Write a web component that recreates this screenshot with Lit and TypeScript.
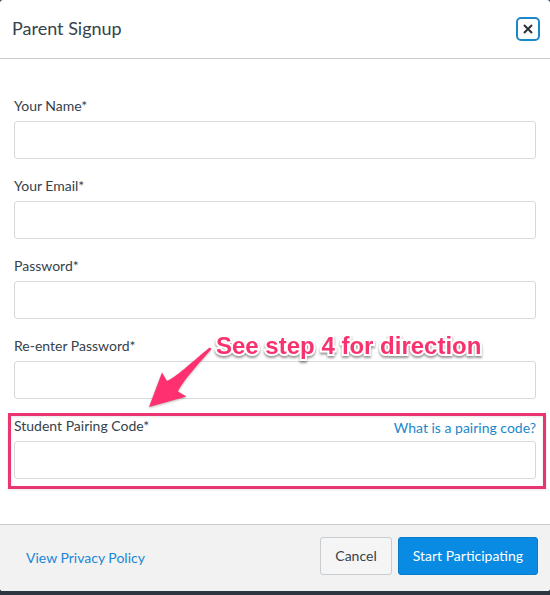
import { LitElement, html, css, svg, nothing } from "lit";
import { customElement, property } from "lit/decorators.js";

const arrow = svg`<path d="M9 67 L22 32.500 L27 41 C35 38 52 22 69 8 Q71.500 7 71 9.500 C60 22 42 42 38 51.500 L46.500 56.500 Z"/>`;

@customElement("form-field")
class FormField extends LitElement {
  @property() label = "";
  @property() type = "text";
  @property() help = "";

  static styles = css`
    :host { display: block; position: relative; }
    .row { display: flex; justify-content: space-between; height: 20px; margin-bottom: 5px; }
    label { font-size: 14px; line-height: 20px; color: #35424c; }
    a { font-size: 14px; line-height: 24px; color: #1c87cb; text-decoration: none; }
    input {
      display: block; box-sizing: border-box; width: 100%; height: 38px;
      padding: 0 12px; border: 1px solid #d4dadd; border-radius: 3px;
      background: #fff; color: #35424c; font: inherit; font-size: 14px;
    }
  `;

  render() {
    return html`
      <div class="row">
        <label for="control">${this.label}*</label>
        ${this.help ? html`<a href="#help">${this.help}</a>` : nothing}
      </div>
      <input id="control" type=${this.type} required />
      <slot></slot>
    `;
  }
}

@customElement("app-root")
class AppRoot extends LitElement {
  static styles = css`
    :host {
      display: block; background: #2d3640; color: #35424c;
      font-family: Lato, "Liberation Sans", sans-serif; padding-bottom: 4px;
    }
    .dialog { background: #fff; border-radius: 3px; overflow: hidden; }
    header {
      display: flex; align-items: center; justify-content: space-between;
      box-sizing: border-box; height: 59px; padding: 0 10px 0 12px;
      border-bottom: 1px solid #c7cdd1;
    }
    h1 { margin: 0; padding-bottom: 2px; font-size: 18px; line-height: 24px; font-weight: 400; }
    .close {
      display: grid; place-items: center; width: 24px; height: 24px; padding: 0;
      border: 2px solid #1c87cb; border-radius: 5px; background: #fff;
    }
    .close svg { stroke: #2d3038; stroke-width: 2; fill: none; }
    .fields { display: grid; gap: 17px; padding: 37px 14px 45px; }
    .note { position: absolute; top: 0; left: 126px; display: flex; pointer-events: none; z-index: 1; }
    .note svg { fill: #ff3070; filter: drop-shadow(0 1px 1px rgba(0, 0, 0, 0.3)); }
    .note span {
      font: bold 24px/20px "Liberation Sans", sans-serif; color: #f7326f; white-space: nowrap;
      -webkit-text-stroke: 4px #fff; paint-order: stroke fill;
      filter: drop-shadow(0 2px 1px rgba(0, 0, 0, 0.4));
    }
    .frame {
      position: absolute; top: -3px; right: -10px; bottom: -10px; left: -6px;
      border: 3px solid #ea3670; pointer-events: none;
      filter: drop-shadow(0 1px 1px rgba(0, 0, 0, 0.1));
    }
    footer {
      display: flex; align-items: center; gap: 6px; padding: 12px 12px 16px 26px;
      border-top: 1px solid #c7cdd1; background: #f2f2f2;
    }
    footer a { margin-right: auto; padding-top: 4px; font-size: 14px; line-height: 20px; color: #1c87d4; text-decoration: none; }
    footer button {
      box-sizing: border-box; height: 38px; padding: 0 14px 2px; border: 1px solid #c7cdd1;
      border-radius: 3px; background: #f5f5f5; color: #35424c; font: inherit; font-size: 14px;
    }
    footer .primary { background: #098be3; border-color: #0b7cc9; color: #fff; }
  `;

  render() {
    return html`
      <form class="dialog" @submit=${(e: Event) => e.preventDefault()}>
        <header>
          <h1>Parent Signup</h1>
          <button class="close" type="button" aria-label="Close">
            <svg width="12" height="12" viewBox="0 0 12 12"><path d="M2 2 L10 10 M10 2 L2 10"/></svg>
          </button>
        </header>
        <div class="fields">
          <form-field label="Your Name"></form-field>
          <form-field label="Your Email" type="email"></form-field>
          <form-field label="Password" type="password"></form-field>
          <form-field label="Re-enter Password" type="password">
            <div class="note">
              <svg width="76" height="76" viewBox="0 -4 76 76">${arrow}</svg>
              <span>See step 4 for direction</span>
            </div>
          </form-field>
          <form-field label="Student Pairing Code" help="What is a pairing code?">
            <div class="frame"></div>
          </form-field>
        </div>
        <footer>
          <a href="#privacy">View Privacy Policy</a>
          <button type="button">Cancel</button>
          <button class="primary" type="submit">Start Participating</button>
        </footer>
      </form>
    `;
  }
}
